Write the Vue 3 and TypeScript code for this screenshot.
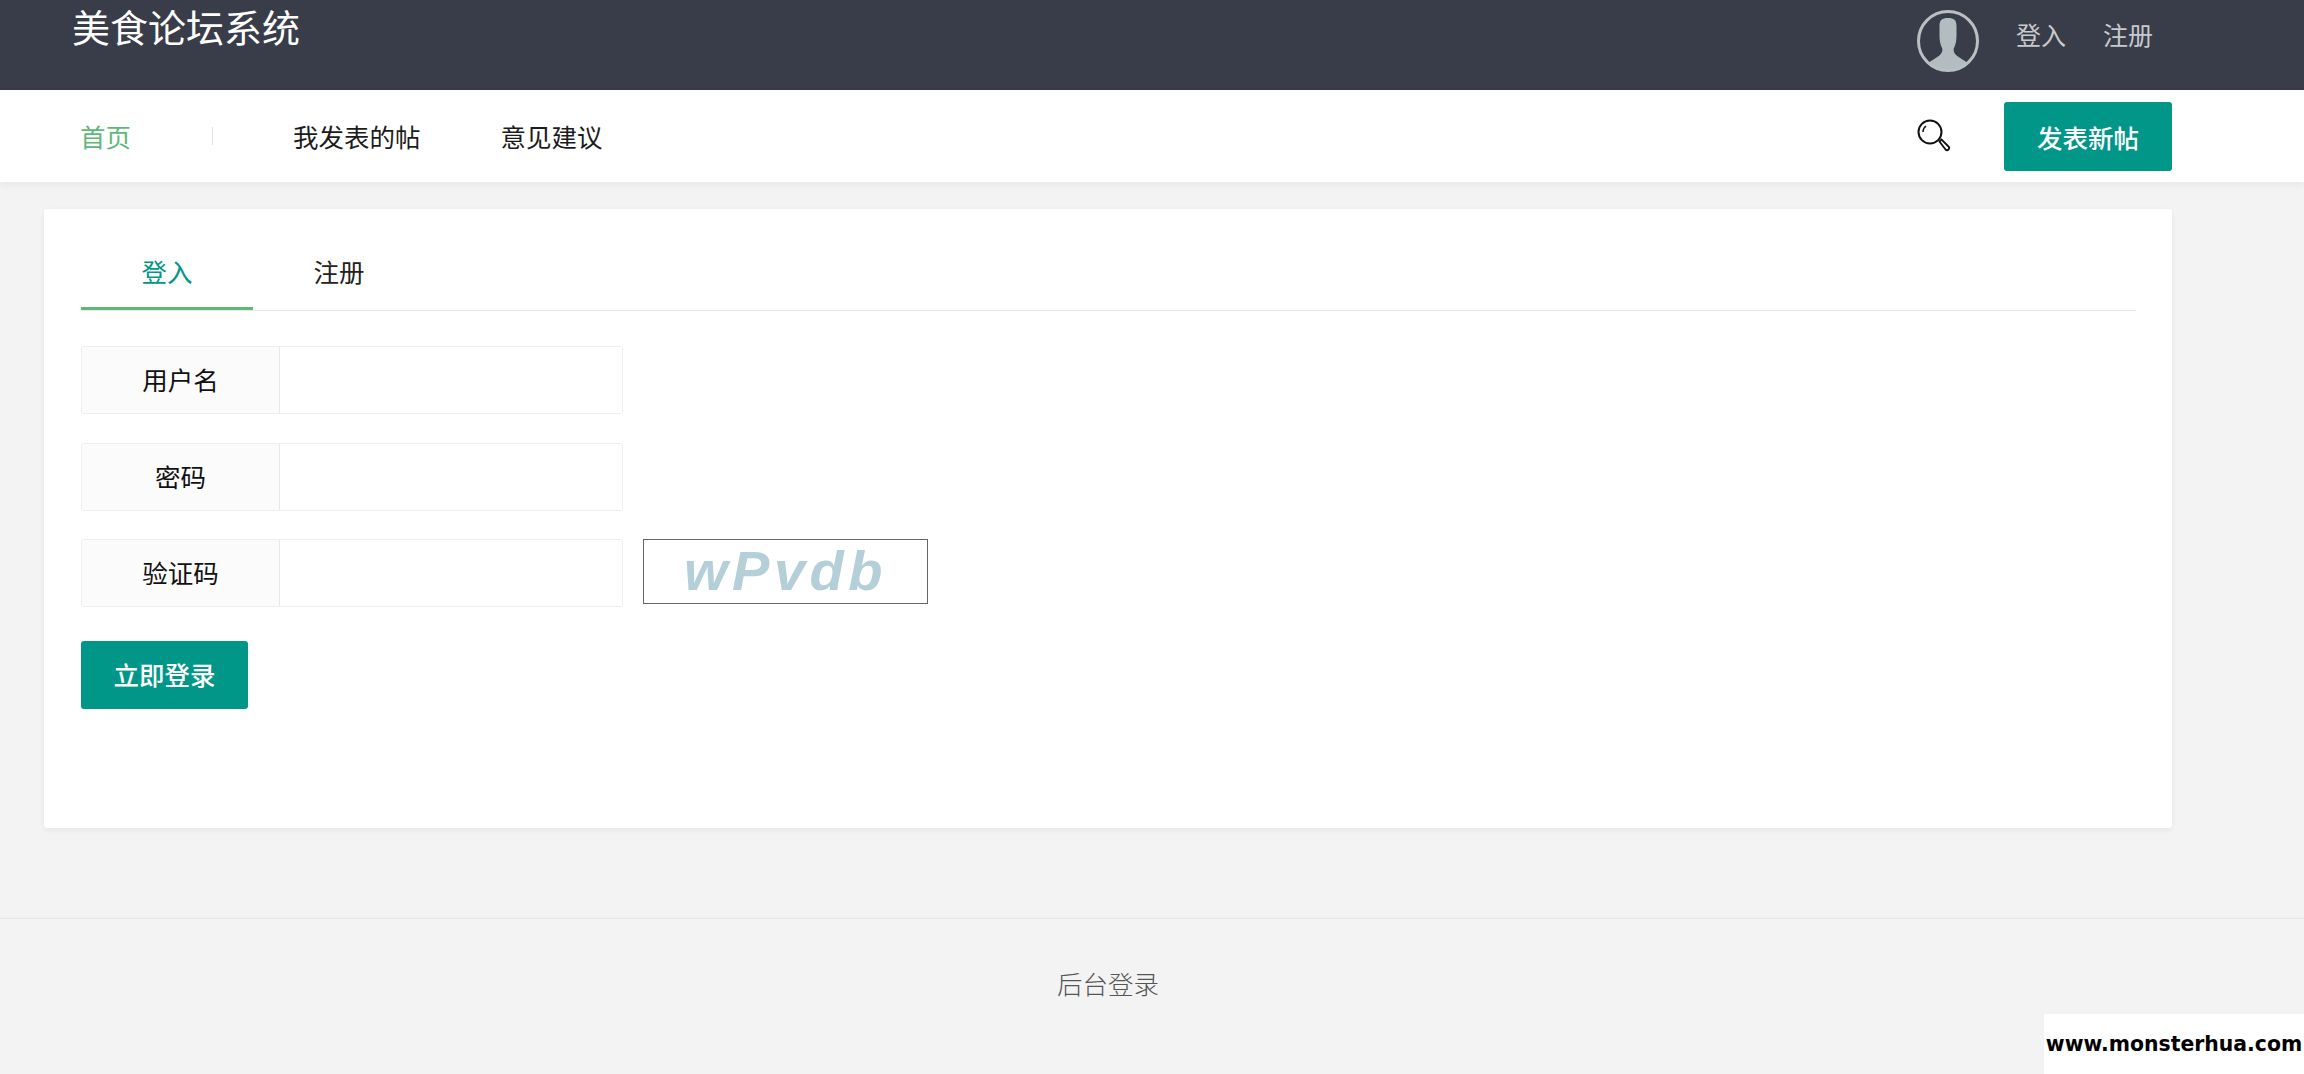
<script setup lang="ts">
const navItems: string[] = ['我发表的帖', '意见建议']
const rows: { label: string; type: string; captcha?: boolean }[] = [
  { label: '用户名', type: 'text' },
  { label: '密码', type: 'password' },
  { label: '验证码', type: 'text', captcha: true },
]
</script>

<template>
  <div class="page">
    <header class="header">
      <div class="title">美食论坛系统</div>
      <div class="user">
        <svg class="avatar" width="62" height="62" viewBox="0 0 62 62">
          <defs>
            <clipPath id="avatar-clip"><circle cx="31" cy="31" r="29" /></clipPath>
          </defs>
          <g clip-path="url(#avatar-clip)" fill="#b3bcc1">
            <path d="M31 8c-6 0-8.500 2-8.500 8v10c0 5 1 9 2.500 12 1 2 0 5-2 7-3 3-9 5-12 9v8h40v-8c-3-4-9-6-12-9-2-2-3-5-2-7 1.500-3 2.500-7 2.500-12V16c0-6-2.500-8-8.500-8z" />
          </g>
          <circle cx="31" cy="31" r="29.500" fill="none" stroke="#b9c0c4" stroke-width="3" />
        </svg>
        <a class="user-link">登入</a>
        <a class="user-link">注册</a>
      </div>
    </header>

    <nav class="nav">
      <a class="nav-link home">首页</a>
      <span class="sep"></span>
      <a v-for="item in navItems" :key="item" class="nav-link">{{ item }}</a>
      <div class="nav-right">
        <svg class="search" width="35" height="34" viewBox="0 0 35 34" fill="none" stroke="#111">
          <circle cx="14" cy="13" r="11.500" stroke-width="2" />
          <path d="M7 13c0-2.500 1-4.500 3-6" stroke-width="1.500" />
          <path d="M23.500 22.500l2-2 7 7c1 1 1 2 0 3s-2 1-3 0z" stroke-width="1.800" />
        </svg>
        <button class="btn post">发表新帖</button>
      </div>
    </nav>

    <main class="main">
      <section class="card">
        <div class="tabs">
          <div class="tab active">登入</div>
          <div class="tab">注册</div>
        </div>
        <form class="form" @submit.prevent>
          <div v-for="row in rows" :key="row.label" class="row">
            <div class="field">
              <label class="label">{{ row.label }}</label>
              <input class="input" :type="row.type" />
            </div>
            <div v-if="row.captcha" class="captcha"><span>wPvdb</span></div>
          </div>
          <button class="btn submit">立即登录</button>
        </form>
      </section>
    </main>

    <footer class="footer">后台登录</footer>
    <div class="watermark">www.monsterhua.com</div>
  </div>
</template>

<style>
html, body { margin: 0; background: #f3f3f3; }
</style>

<style scoped>
.page {
  position: relative;
  height: 1074px;
  overflow: hidden;
  background: #f3f3f3;
  font-family: "Noto Sans CJK SC", "Noto Sans", sans-serif;
  font-size: 25.500px;
  color: #222;
}
.header {
  height: 90px;
  background: #393d49;
  display: flex;
  justify-content: space-between;
  padding: 0 151px 0 72px;
  box-sizing: border-box;
}
.title {
  font-size: 38px;
  line-height: 52px;
  color: #fff;
}
.user {
  display: flex;
  align-items: flex-start;
  padding-top: 10px;
}
.avatar { display: block; }
.user-link {
  color: #c8cacd;
  font-size: 25px;
  line-height: 48px;
  margin-left: 37px;
}
.nav {
  height: 92px;
  background: #fff;
  display: flex;
  align-items: center;
  padding: 0 132px 0 80px;
  box-shadow: 0 3px 8px rgba(0, 0, 0, 0.05);
  position: relative;
}
.nav-link {
  margin-right: 80px;
  margin-bottom: 2px;
  color: #1c1c1c;
}
.nav-link.home {
  color: #5fb878;
  margin-right: 81px;
}
.sep {
  width: 1px;
  height: 18px;
  background: #e2e2e2;
  margin-right: 80px;
}
.nav-right {
  margin-left: auto;
  display: flex;
  align-items: center;
  gap: 53px;
}
.search { display: block; margin-top: -1px; }
.btn {
  border: none;
  background: #009688;
  color: #fff;
  font: inherit;
  border-radius: 3px;
  padding: 0;
}
.post { width: 168px; height: 69px; font-weight: 500; }
.main { padding: 27px 0 0 44px; }
.card {
  width: 2128px;
  height: 619px;
  background: #fff;
  border-radius: 3px;
  box-shadow: 0 2px 6px rgba(0, 0, 0, 0.06);
  padding: 0 36px 0 37px;
  box-sizing: border-box;
}
.tabs {
  display: flex;
  height: 102px;
  border-bottom: 1px solid #e8e8e8;
  box-sizing: border-box;
  padding-top: 40px;
}
.tab {
  width: 172px;
  height: 61px;
  box-sizing: border-box;
  text-align: center;
  line-height: 44px;
}
.tab.active {
  color: #009688;
  border-bottom: 3px solid #5fb878;
}
.form {
  padding-top: 35px;
  display: flex;
  flex-direction: column;
  align-items: flex-start;
}
.row {
  display: flex;
  align-items: flex-start;
  margin-bottom: 28px;
  width: 100%;
}
.row:nth-child(1) { margin-bottom: 29px; }
.row:nth-child(3) { margin-bottom: 34px; }
.field {
  display: flex;
  width: 542px;
  height: 68px;
  border: 1px solid #eeeeee;
  border-radius: 3px;
  box-sizing: border-box;
}
.label {
  width: 198px;
  flex: none;
  background: #fbfbfb;
  border-right: 1px solid #e8e8e8;
  box-sizing: border-box;
  text-align: center;
  line-height: 63px;
  color: #111;
}
.input {
  flex: 1;
  min-width: 0;
  border: none;
  outline: none;
  background: #fff;
  padding: 0 14px;
}
.captcha {
  margin-left: 20px;
  width: 285px;
  height: 65px;
  border: 1px solid #666;
  box-sizing: border-box;
  display: flex;
  align-items: center;
  justify-content: center;
  padding-bottom: 2px;
  font-family: "Liberation Sans", sans-serif;
  font-weight: 700;
  font-style: italic;
  font-size: 56px;
  letter-spacing: 4.500px;
  color: #b5cfd9;
  line-height: 1;
}
.submit { width: 167px; height: 68px; font-weight: 500; padding-bottom: 3px; }
.footer {
  position: absolute;
  left: 0;
  right: 0;
  top: 918px;
  height: 156px;
  box-sizing: border-box;
  border-top: 1px solid #e6e6e6;
  padding-top: 43px;
  padding-right: 88px;
  text-align: center;
  line-height: 42px;
  color: #555;
  font-weight: 300;
}
.watermark {
  position: absolute;
  right: 0;
  bottom: 0;
  width: 260px;
  height: 60px;
  background: #fff;
  font-family: "DejaVu Sans", sans-serif;
  font-weight: 700;
  font-size: 20.400px;
  line-height: 60px;
  text-align: center;
  color: #000;
  white-space: nowrap;
}
</style>
